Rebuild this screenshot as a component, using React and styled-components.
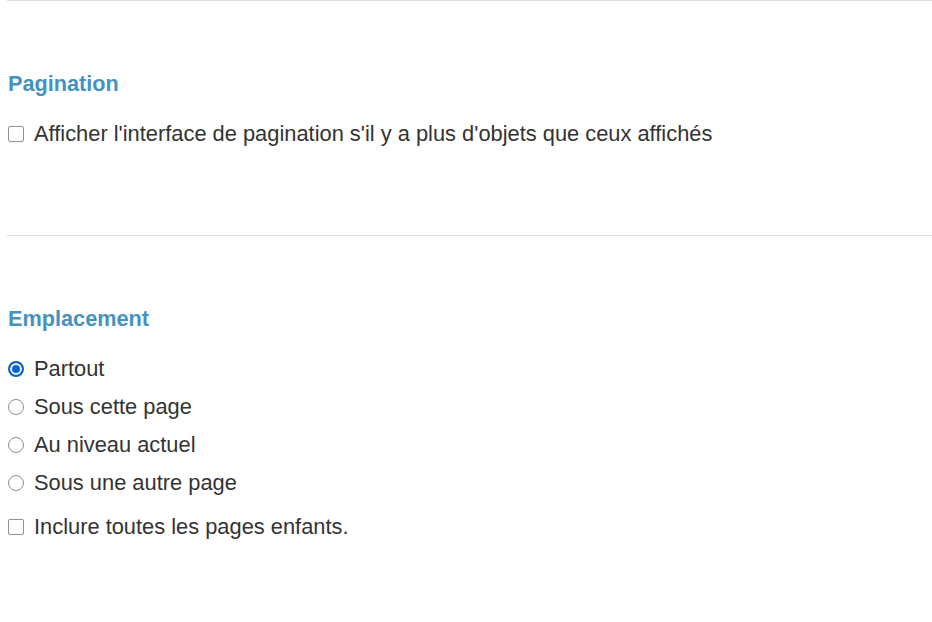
import styled, { createGlobalStyle } from "styled-components";

const GlobalStyle = createGlobalStyle`
  body {
    margin: 0;
    background: #fff;
    font-family: "Liberation Sans", Arial, sans-serif;
    color: #333;
  }
`;

const Page = styled.div`
  padding: 0 0 0 7px;
`;

const Rule = styled.hr`
  margin: 0;
  border: none;
  border-top: 1px solid #ddd;
  height: 0;
`;

const Section = styled.section`
  padding: ${(props) => props.$padding};
`;

const Heading = styled.h3`
  margin: 0 0 0 1px;
  font-size: 21.7px;
  font-weight: bold;
  color: #4592c0;
  line-height: 24px;
  padding-top: 1px;
`;

const OptionList = styled.div`
  display: flex;
  flex-direction: column;
  margin-top: ${(props) => props.$top}px;
`;

const Option = styled.label`
  display: flex;
  align-items: center;
  gap: 10px;
  height: ${(props) => props.$height || 38}px;
  font-size: 21.85px;
  padding-left: 1px;
`;

const Box = styled.input`
  appearance: none;
  box-sizing: border-box;
  width: 16px;
  height: 16px;
  margin: 0;
  flex: none;
  border: 1.5px solid #8f8f9d;
  border-radius: ${(props) => (props.type === "radio" ? "50%" : "2px")};
  background: #fff;

  &:checked {
    border: 2px solid #0b62d6;
    box-shadow: inset 0 0 0 2px #fff;
    background: #0b62d6;
  }
`;

const Pagination = () => (
  <Section $padding="70px 0 82px 0">
    <Heading>Pagination</Heading>
    <OptionList $top={19}>
      <Option>
        <Box type="checkbox" />
        Afficher l'interface de pagination s'il y a plus d'objets que ceux affichés
      </Option>
    </OptionList>
  </Section>
);

const places = ["Partout", "Sous cette page", "Au niveau actuel", "Sous une autre page"];

const Emplacement = () => (
  <Section $padding="70px 0 40px 0">
    <Heading>Emplacement</Heading>
    <OptionList $top={19}>
      {places.map((p, i) => (
        <Option key={p}>
          <Box type="radio" name="place" defaultChecked={i === 0} />
          {p}
        </Option>
      ))}
      <Option $height={50}>
        <Box type="checkbox" />
        Inclure toutes les pages enfants.
      </Option>
    </OptionList>
  </Section>
);

export default function App() {
  return (
    <>
      <GlobalStyle />
      <Page>
        <Rule />
        <Pagination />
        <Rule />
        <Emplacement />
      </Page>
    </>
  );
}
